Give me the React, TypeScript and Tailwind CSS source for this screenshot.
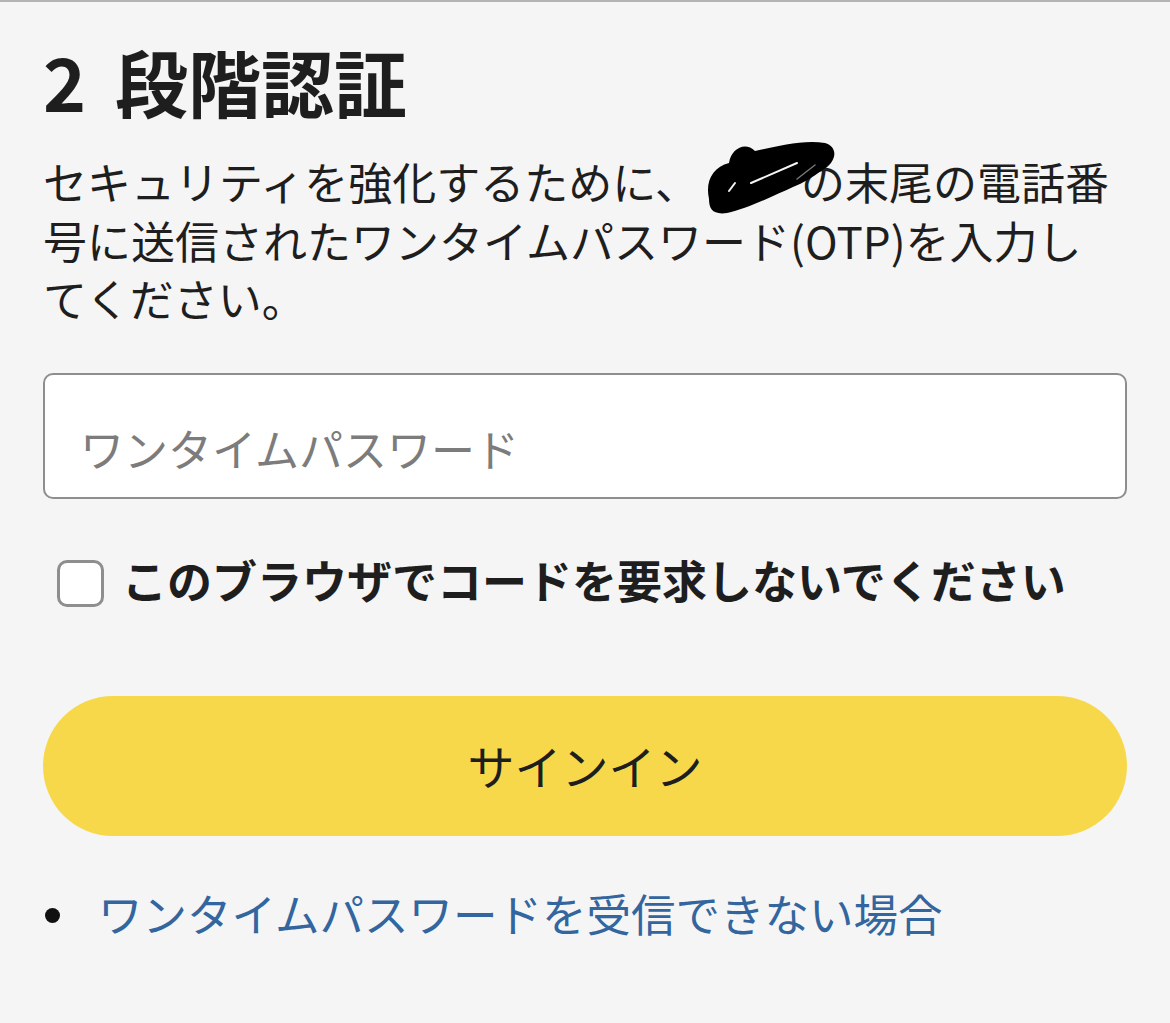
import { useState } from "react";

function Redaction() {
  return (
    <span className="relative inline-block w-[102px] h-[1em] align-middle">
      <svg
        className="absolute left-[6px] top-[-27px] overflow-visible"
        width="132"
        height="78"
        viewBox="0 0 132 78"
        fill="none"
      >
        <path
          d="M4 60 C 0 42, 8 28, 24 24 C 26 10, 40 2, 50 12 C 70 8, 98 0, 120 4 C 134 8, 132 24, 116 32 C 108 38, 98 44, 88 48 C 70 56, 42 70, 22 74 C 8 76, 4 70, 4 60 Z"
          fill="#000"
        />
        <path d="M18 68 C 24 64, 28 62, 30 58" stroke="#000" strokeWidth="12" strokeLinecap="round" />
        <path d="M46 44 L 92 24" stroke="#f5f5f5" strokeWidth="2" strokeLinecap="round" />
        <path d="M24 52 L 30 44" stroke="#f5f5f5" strokeWidth="2" strokeLinecap="round" />
        <path d="M92 40 L 110 26" stroke="#777" strokeWidth="1.5" strokeLinecap="round" />
      </svg>
    </span>
  );
}

export default function App() {
  const [otp, setOtp] = useState("");
  const [remember, setRemember] = useState(false);

  return (
    <main
      className="min-h-screen bg-[#f5f5f5] border-t-2 border-[#b4b4b4] px-[43px] text-[#1e1e1e]"
      style={{ fontFamily: '"Noto Sans CJK JP", "Noto Sans", sans-serif' }}
    >
      <h1 className="mt-[36px] text-[73px] leading-[84px] font-bold">
        <span className="inline-block w-[72px]">2</span>段階認証
      </h1>

      <p className="mt-[30px] w-[1076px] text-[44px] leading-[58.5px]">
        セキュリティを強化するために、
        <Redaction />
        の末尾の電話番号に送信されたワンタイムパスワード(OTP)を入力してください。
      </p>

      <input
        type="text"
        placeholder="ワンタイムパスワード"
        value={otp}
        onChange={(e) => setOtp(e.target.value)}
        className="mt-[45px] block w-full h-[126px] bg-white border-2 border-[#8e8e8e] rounded-[10px] px-[35px] pt-[24px] text-[44px] placeholder:text-[#7c7c7c] outline-none"
      />

      <label className="mt-[56px] flex items-center gap-[18px] pl-[14px] cursor-pointer">
        <span
          onClick={() => setRemember(!remember)}
          className="w-[47px] h-[47px] shrink-0 rounded-[10px] border-[3px] border-[#8e8e8e] bg-white"
        />
        <span className="relative -top-[4px] text-[45px] leading-[58px] font-bold">
          このブラウザでコードを要求しないでください
        </span>
      </label>

      <button className="mt-[83px] block w-full h-[140px] rounded-full bg-[#f7d84a] text-[47px] text-[#1e1e1e]">
        サインイン
      </button>

      <ul className="mt-[48px] pl-[2px]">
        <li className="flex items-center gap-[38px] text-[44.5px] leading-[58px]">
          <span className="mt-[6px] w-[15px] h-[15px] rounded-full bg-[#111] shrink-0" />
          <a href="#" className="text-[#33659e]">
            ワンタイムパスワードを受信できない場合
          </a>
        </li>
      </ul>
    </main>
  );
}
